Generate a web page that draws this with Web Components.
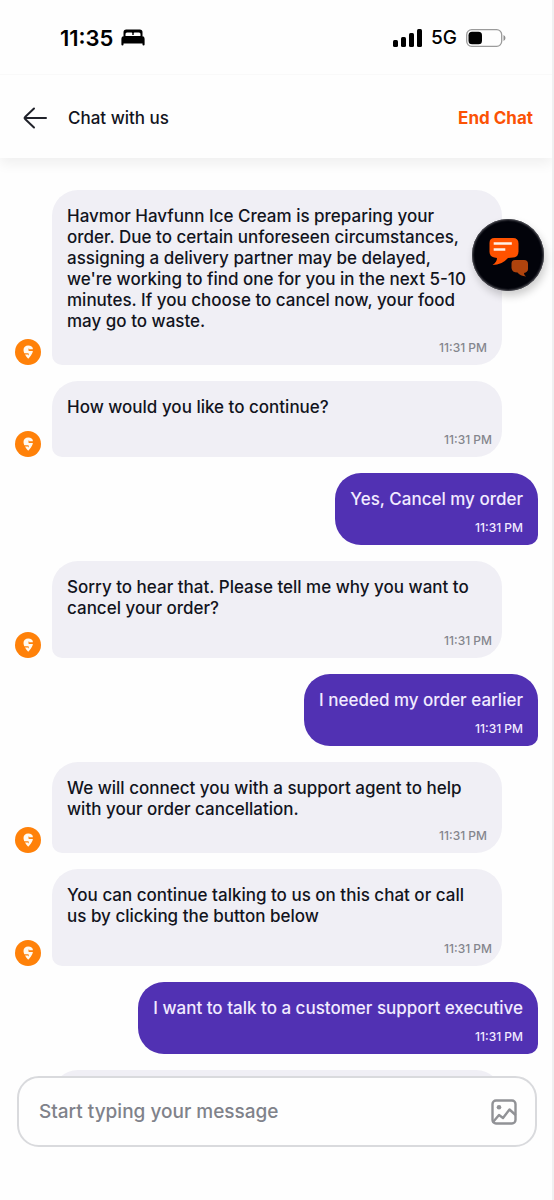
<!DOCTYPE html>
<html lang="en">
<head>
<meta charset="utf-8">
<meta name="viewport" content="width=device-width, initial-scale=1">
<title>Chat with us</title>
<style>
html, body { margin: 0; height: 100%; }
body { background: #fefefe; color: #12141d; font-family: Inter, "Liberation Sans", sans-serif; font-weight: 500; }
</style>
</head>
<body>
<chat-app>
  <status-bar slot="status" time="11:35" network="5G"></status-bar>
  <chat-header slot="header">Chat with us</chat-header>
  <bot-message time="11:31 PM" compact>Havmor Havfunn Ice Cream is preparing your<br>order. Due to certain unforeseen circumstances,<br>assigning a delivery partner may be delayed,<br>we're working to find one for you in the next 5-10<br>minutes. If you choose to cancel now, your food<br>may go to waste.</bot-message>
  <bot-message time="11:31 PM">How would you like to continue?</bot-message>
  <user-message time="11:31 PM">Yes, Cancel my order</user-message>
  <bot-message time="11:31 PM">Sorry to hear that. Please tell me why you want to<br>cancel your order?</bot-message>
  <user-message time="11:31 PM">I needed my order earlier</user-message>
  <bot-message time="11:31 PM" compact>We will connect you with a support agent to help<br>with your order cancellation.</bot-message>
  <bot-message time="11:31 PM">You can continue talking to us on this chat or call<br>us by clicking the button below</bot-message>
  <user-message time="11:31 PM">I want to talk to a customer support executive</user-message>
  <bot-message></bot-message>
  <chat-bubble-button slot="float"></chat-bubble-button>
  <chat-composer slot="composer"></chat-composer>
</chat-app>
<script>
class BaseElement extends HTMLElement {
  constructor() {
    super();
    this.attachShadow({ mode: "open" }).innerHTML = this.render();
  }
  attr(name) { return this.getAttribute(name) || ""; }
}

customElements.define("chat-app", class extends BaseElement {
  render() {
    return `<style>
      :host { display: flex; flex-direction: column; height: 100%; box-sizing: border-box; position: relative; border-right: 2px solid #f0f0f1; }
      main { flex: 1; min-height: 0; overflow: hidden; display: flex; flex-direction: column; gap: 16px; padding: 32px 14px 0 15px; }
    </style>
    <slot name="status"></slot>
    <slot name="header"></slot>
    <main><slot></slot></main>
    <slot name="composer"></slot>
    <slot name="float"></slot>`;
  }
});

customElements.define("status-bar", class extends BaseElement {
  render() {
    return `<style>
      :host { display: flex; justify-content: space-between; align-items: center; box-sizing: border-box; height: 75px; padding: 1px 46px 0 60px; color: #000; border-bottom: 1px solid #f9f9f9; }
      div { display: flex; align-items: center; }
      .time { gap: 8px; font: 600 22px/26px Inter, sans-serif; }
      .signal { gap: 9px; font: 500 19px/24px Inter, sans-serif; }
      svg { display: block; }
    </style>
    <div class="time"><span>${this.attr("time")}</span>
      <svg width="24" height="17" viewBox="0 0 24 17"><path d="M2.500 7V3.200Q2.500 .5 5.200 .5H18.800Q21.500 .5 21.500 3.200V7H19.500V5Q19.500 3.500 18 3.500H13.500Q12.700 3.500 12.700 4.300V6H11.300V4.300Q11.300 3.500 10.500 3.500H6Q4.500 3.500 4.500 5V7Z"/><path d="M3.500 7H20.500Q23.600 7 23.600 10V15.500Q23.600 16.600 22.500 16.600Q21.500 16.600 21.500 15.500V14.500H2.500V15.500Q2.500 16.600 1.500 16.600Q.4 16.600 .4 15.500V10Q.4 7 3.500 7Z"/></svg>
    </div>
    <div class="signal">
      <svg width="29" height="18" viewBox="0 0 29 18"><rect y="11" width="5" height="7" rx="1.500"/><rect x="8" y="8" width="5" height="10" rx="1.500"/><rect x="16" y="4" width="5" height="14" rx="1.500"/><rect x="24" width="5" height="18" rx="1.500"/></svg>
      <span>${this.attr("network")}</span>
      <svg width="40" height="18" viewBox="0 0 40 18"><rect x=".7" y=".7" width="35" height="16.600" rx="5" fill="none" stroke="#9b9b9b" stroke-width="1.300"/><rect x="2.500" y="2.700" width="13.500" height="12.600" rx="3.500"/><path d="M37.500 6v6q2-1 2-3t-2-3z" fill="#8e8e8e"/></svg>
    </div>`;
  }
});

customElements.define("chat-header", class extends BaseElement {
  render() {
    return `<style>
      :host { display: flex; align-items: center; box-sizing: border-box; height: 83px; padding: 2px 19px 0 22px; position: relative; background: #fefefe; box-shadow: 0 6px 12px rgba(0,0,0,.06); clip-path: inset(0 0 -20px 0); }
      button { border: 0; background: none; padding: 0; font: inherit; cursor: pointer; }
      h1 { flex: 1; margin: 0 0 0 20px; font-size: 17px; line-height: 24px; font-weight: 500; }
      .end { color: #fb5205; font-size: 17px; line-height: 24px; font-weight: 700; }
      svg { display: block; }
    </style>
    <button aria-label="Back"><svg width="26" height="24" viewBox="0 0 26 24" fill="none" stroke="#20222a" stroke-width="2" stroke-linecap="round" stroke-linejoin="round"><path d="M24 12H2.500M12 2.500L3.600 10.500Q2 12 3.600 13.500L12 21.500"/></svg></button>
    <h1><slot></slot></h1>
    <button class="end">End Chat</button>`;
  }
});

customElements.define("bot-message", class extends BaseElement {
  render() {
    return `<style>
      :host { display: flex; align-items: flex-end; gap: 11px; flex: none; margin-right: 36px; }
      .bubble { flex: 1; background: #f0eff5; border-radius: 26px 26px 26px 10px; padding: 16px 10px 8px 15px; font-size: 17px; line-height: 21px; white-space: nowrap; }
      time { display: block; margin-top: 13px; text-align: right; font-size: 12px; line-height: 18px; color: #85868d; min-height: 18px; }
      :host([compact]) .bubble { padding-right: 15px; }
      :host([compact]) time { margin-top: 7px; }
      svg { display: block; flex: none; }
    </style>
    <svg width="26" height="26" viewBox="0 0 26 26"><circle cx="13" cy="13" r="13" fill="#ff8109"/><path fill="#fffaf2" d="M13.200 6.500C16 6.500 17.900 8 17.900 9.900Q17.900 10.300 17.300 10.300H14.200V9.400H13.500V11.500Q13.500 11.900 14 11.900H17.500Q18 11.900 17.800 12.800C17.200 15.300 15 17.800 13.200 19.800C12 18.400 10.800 17 10 15.400H13V16.300H13.700V14.700Q13.700 14.200 13.200 14.200H9.300C8.800 12.900 8.500 11.800 8.500 10.900C8.500 8.200 10.500 6.500 13.200 6.500Z"/></svg>
    <div class="bubble"><slot></slot><time>${this.attr("time")}</time></div>`;
  }
});

customElements.define("user-message", class extends BaseElement {
  render() {
    return `<style>
      :host { display: block; flex: none; align-self: flex-end; background: #5131b3; color: #f1ebff; border-radius: 26px 26px 10px 26px; padding: 16px 15px 8px; font-size: 17px; line-height: 21px; white-space: nowrap; }
      time { display: block; margin-top: 9px; text-align: right; font-size: 12px; line-height: 18px; }
    </style>
    <slot></slot><time>${this.attr("time")}</time>`;
  }
});

customElements.define("chat-bubble-button", class extends BaseElement {
  render() {
    return `<style>
      :host { display: block; position: absolute; top: 219px; right: 8px; }
      button { display: block; width: 72px; height: 72px; padding: 0; border: 0; border-radius: 50%; background: #02030a; box-shadow: inset 0 0 2px 1px #55555c, 2px 5px 8px rgba(0,0,0,.2); cursor: pointer; }
      svg { display: block; }
    </style>
    <button aria-label="Open chats"><svg width="72" height="72" viewBox="0 0 72 72"><path fill="#ff5200" d="M22.500 19H41Q46.500 19 46.500 24.500V32.500Q46.500 38 41 38.500L36 39Q30 46 20.500 46Q25 43 25 39L22.500 38.500Q17.500 37.500 17.500 33V24Q17.500 19 22.500 19Z"/><path d="M23 24.500H38.500M23 30.500H32" stroke="#fff0e5" stroke-width="2.600" stroke-linecap="square"/><path fill="#ae430d" d="M43 41H52Q56 41 56 45V50Q56 53 52 54Q52 56 54 57.500Q48 57 45.500 53.500Q40 53.500 39.500 49V44.500Q39.500 41 43 41Z"/></svg></button>`;
  }
});

customElements.define("chat-composer", class extends BaseElement {
  render() {
    return `<style>
      :host { display: block; padding: 0 15px 53px 17px; }
      form { display: flex; align-items: center; box-sizing: border-box; height: 71px; border: 2px solid #d9dadd; border-radius: 22px; background: #fefefe; padding: 0 18px 0 20px; }
      input { flex: 1; min-width: 0; border: 0; outline: 0; background: none; padding: 0; font: 500 19px/26px Inter, sans-serif; color: #12141d; }
      input::placeholder { color: #80828a; opacity: 1; }
      button { border: 0; background: none; padding: 0; cursor: pointer; }
      svg { display: block; }
    </style>
    <form>
      <input type="text" aria-label="Message" placeholder="Start typing your message">
      <button type="button" aria-label="Attach image"><svg width="26" height="26" viewBox="0 0 26 26" fill="none" stroke="#919296" stroke-width="2.400" stroke-linejoin="round" stroke-linecap="round"><rect x="1.500" y="1.500" width="23" height="23" rx="3.500"/><path d="M2.500 22.500L8 16L12 19L18.500 10.500L24 15.500"/><circle cx="8" cy="8.200" r="2.300" fill="#919296" stroke="none"/></svg></button>
    </form>`;
  }
});
</script>
</body>
</html>
